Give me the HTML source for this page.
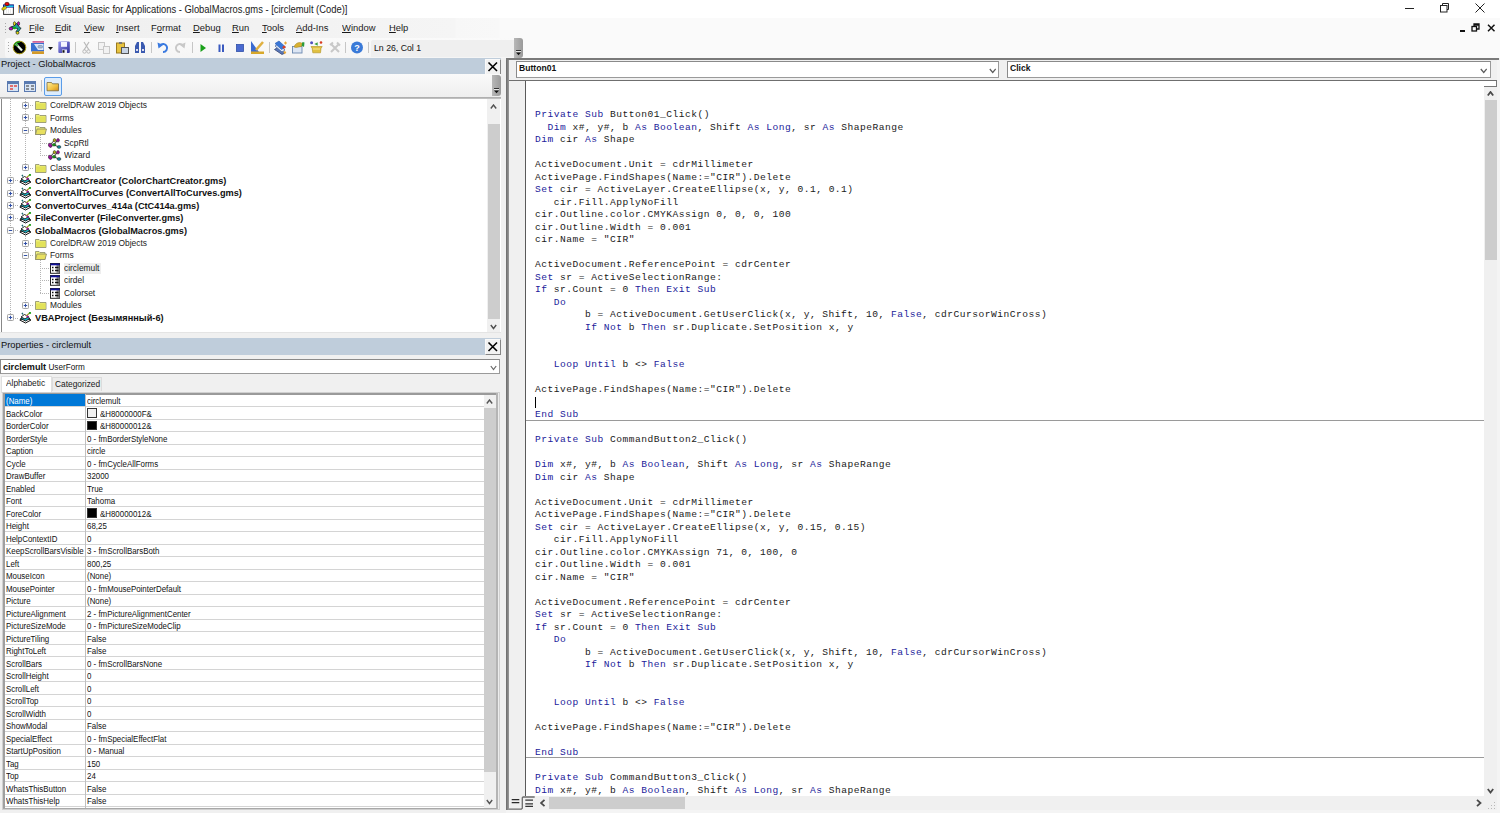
<!DOCTYPE html><html><head><meta charset="utf-8"><style>html,body{margin:0;padding:0;width:1500px;height:813px;overflow:hidden;background:#f0f0f0;position:relative}body>div,body>svg{position:absolute}.t{position:absolute;white-space:pre;line-height:1.2}u{text-decoration:underline;text-underline-offset:1px}.code{position:absolute;white-space:pre;font-family:'Liberation Mono',monospace;font-size:9.6px;letter-spacing:0.49px;line-height:12.5px;color:#1a1a1a}.k{color:#22229a}</style></head><body><div style="left:0px;top:0px;width:1500px;height:18px;background:#fff"></div>
<svg style="position:absolute;left:0;top:0" width="16" height="17" viewBox="0 0 16 17">
<rect x="3.6" y="5.1" width="9.8" height="9.3" fill="#fff" stroke="#333" stroke-width="1"/>
<rect x="3.1" y="4.6" width="10.8" height="3" fill="#1a1aa0"/>
<rect x="4" y="5.5" width="9.5" height="1.4" fill="#18e0f0"/>
<path d="M6 10 h1 M8 10 h1 M10 10 h1 M6 12 h1 M8 12 h1 M10 12 h1" stroke="#ccc" stroke-width="0.8"/>
<ellipse cx="7" cy="4" rx="2.2" ry="1.7" fill="#e80808" stroke="#300" stroke-width="0.6"/>
<ellipse cx="4.2" cy="8.3" rx="2.7" ry="1.5" fill="#e0d000" stroke="#443" stroke-width="0.5" transform="rotate(-30 4.2 8.3)"/>
</svg>
<div class="t" style="left:18px;top:3.94px;font-size:10px;color:#1a1a1a;font-weight:400;font-family:'Liberation Sans', sans-serif;transform:scaleX(0.94);transform-origin:0 0;">Microsoft Visual Basic for Applications - GlobalMacros.gms - [circlemult (Code)]</div>
<div style="left:1405px;top:8px;width:8.5px;height:1px;background:#222"></div>
<svg style="position:absolute;left:1439px;top:3px" width="11" height="10" viewBox="0 0 11 10"><rect x="1.5" y="2.5" width="6.5" height="6.5" fill="none" stroke="#222" stroke-width="1"/><path d="M3.5 2.5 V0.5 H9.5 V6.5 H8" fill="none" stroke="#222" stroke-width="1"/></svg>
<svg style="position:absolute;left:1475px;top:3px" width="11" height="10" viewBox="0 0 11 10"><path d="M0.5 0.5 L9.5 9.5 M9.5 0.5 L0.5 9.5" stroke="#222" stroke-width="1"/></svg>
<div style="left:0px;top:18px;width:1500px;height:20px;background:linear-gradient(to right,#eeeeee 0px,#f5f5f5 455px,#f7f7f7 456px,#f8f8f8 499px,#fafafa 500px,#fafafa 1500px)"></div>
<div style="left:5px;top:22.5px;width:1px;height:1px;background:#a8a8a8"></div>
<div style="left:5px;top:25.5px;width:1px;height:1px;background:#a8a8a8"></div>
<div style="left:5px;top:28.5px;width:1px;height:1px;background:#a8a8a8"></div>
<div style="left:5px;top:31.5px;width:1px;height:1px;background:#a8a8a8"></div>
<svg style="position:absolute;left:8px;top:21px" width="15" height="14" viewBox="0 0 15 14">
<path d="M3 7 L7 5.5 L11.5 7.5 L8.5 11.5 M7 5.5 L8.5 4 L11.5 7.5" stroke="#111" stroke-width="2.6" fill="none"/>
<path d="M3 7 L7 5.5 L11.5 7.5 L8.5 11.5 M7 5.5 L8.5 4 L11.5 7.5" stroke="#1a9a9a" stroke-width="1.6" fill="none"/>
<ellipse cx="3" cy="7.6" rx="1.8" ry="1.5" fill="#c010c0" stroke="#111" stroke-width="0.6"/>
<ellipse cx="6.5" cy="2.6" rx="1.1" ry="1.9" fill="#e8e010" stroke="#111" stroke-width="0.6"/>
<ellipse cx="10.5" cy="2.6" rx="1.1" ry="1.9" fill="#c010c0" stroke="#111" stroke-width="0.6"/>
<ellipse cx="9.5" cy="11.8" rx="1.5" ry="1.4" fill="#e8e010" stroke="#111" stroke-width="0.6"/>
<ellipse cx="6.5" cy="7" rx="1.6" ry="1.2" fill="#10b010"/>
</svg>
<div class="t" style="left:29px;top:22.01px;font-size:9.6px;color:#1a1a1a;font-weight:400;font-family:'Liberation Sans', sans-serif;transform:scaleX(0.98);transform-origin:0 0;"><u>F</u>ile</div>
<div class="t" style="left:55.3px;top:22.01px;font-size:9.6px;color:#1a1a1a;font-weight:400;font-family:'Liberation Sans', sans-serif;transform:scaleX(0.98);transform-origin:0 0;"><u>E</u>dit</div>
<div class="t" style="left:83.6px;top:22.01px;font-size:9.6px;color:#1a1a1a;font-weight:400;font-family:'Liberation Sans', sans-serif;transform:scaleX(0.98);transform-origin:0 0;"><u>V</u>iew</div>
<div class="t" style="left:115.5px;top:22.01px;font-size:9.6px;color:#1a1a1a;font-weight:400;font-family:'Liberation Sans', sans-serif;transform:scaleX(0.98);transform-origin:0 0;"><u>I</u>nsert</div>
<div class="t" style="left:150.8px;top:22.01px;font-size:9.6px;color:#1a1a1a;font-weight:400;font-family:'Liberation Sans', sans-serif;transform:scaleX(0.98);transform-origin:0 0;">F<u>o</u>rmat</div>
<div class="t" style="left:193px;top:22.01px;font-size:9.6px;color:#1a1a1a;font-weight:400;font-family:'Liberation Sans', sans-serif;transform:scaleX(0.98);transform-origin:0 0;"><u>D</u>ebug</div>
<div class="t" style="left:232px;top:22.01px;font-size:9.6px;color:#1a1a1a;font-weight:400;font-family:'Liberation Sans', sans-serif;transform:scaleX(0.98);transform-origin:0 0;"><u>R</u>un</div>
<div class="t" style="left:262px;top:22.01px;font-size:9.6px;color:#1a1a1a;font-weight:400;font-family:'Liberation Sans', sans-serif;transform:scaleX(0.98);transform-origin:0 0;"><u>T</u>ools</div>
<div class="t" style="left:296px;top:22.01px;font-size:9.6px;color:#1a1a1a;font-weight:400;font-family:'Liberation Sans', sans-serif;transform:scaleX(0.98);transform-origin:0 0;"><u>A</u>dd-Ins</div>
<div class="t" style="left:341.5px;top:22.01px;font-size:9.6px;color:#1a1a1a;font-weight:400;font-family:'Liberation Sans', sans-serif;transform:scaleX(0.98);transform-origin:0 0;"><u>W</u>indow</div>
<div class="t" style="left:388.6px;top:22.01px;font-size:9.6px;color:#1a1a1a;font-weight:400;font-family:'Liberation Sans', sans-serif;transform:scaleX(0.98);transform-origin:0 0;"><u>H</u>elp</div>
<div style="left:1460px;top:30px;width:5px;height:2px;background:#111"></div>
<svg style="position:absolute;left:1471px;top:23px" width="9" height="9" viewBox="0 0 9 9"><rect x="1" y="3.5" width="4.5" height="4.5" fill="none" stroke="#111" stroke-width="1.3"/><path d="M3 3.5 V1 H8 V6 H5.5 M3 2 H8" fill="none" stroke="#111" stroke-width="1.3"/></svg>
<svg style="position:absolute;left:1487px;top:24px" width="9" height="8" viewBox="0 0 9 8"><path d="M1 0.8 L7.5 7.2 M7.5 0.8 L1 7.2" stroke="#111" stroke-width="1.5"/></svg>
<div style="left:0px;top:37px;width:1500px;height:21px;background:linear-gradient(to right,#eeeeee 0px,#f5f5f5 455px,#f7f7f7 456px,#f8f8f8 499px,#fafafa 500px,#fafafa 1500px)"></div>
<div style="left:4.6px;top:38px;width:511px;height:19.5px;background:linear-gradient(#fafafa,#f5f5f5);border-radius:3px 0 0 3px"></div>
<div style="left:371px;top:39.8px;width:143px;height:17.4px;background:#efefef;border-radius:2px 0 0 0"></div>
<div style="left:514px;top:38px;width:9px;height:19.5px;background:linear-gradient(to right,#b8b8b8,#9a9a9a);border-radius:0 3px 3px 0"></div>
<svg style="position:absolute;left:515px;top:50px" width="7" height="6" viewBox="0 0 7 6"><path d="M1 0.5 H6" stroke="#333" stroke-width="1"/><path d="M1 1.6 H6" stroke="#fff" stroke-width="0.8"/><path d="M1 2.5 H6 L3.5 5.2 Z" fill="#111"/></svg>
<div style="left:8px;top:42px;width:1px;height:1px;background:#a8a8a8"></div>
<div style="left:8px;top:45px;width:1px;height:1px;background:#a8a8a8"></div>
<div style="left:8px;top:48px;width:1px;height:1px;background:#a8a8a8"></div>
<div style="left:8px;top:51px;width:1px;height:1px;background:#a8a8a8"></div>

<svg style="position:absolute;left:0;top:36px" width="370" height="22" viewBox="0 36 370 22">
<!-- coreldraw -->
<defs><linearGradient id="sv" x1="0" y1="0" x2="1" y2="1"><stop offset="0" stop-color="#9a9af0"/><stop offset="1" stop-color="#2a2a98"/></linearGradient>
<linearGradient id="pk" x1="0" y1="0" x2="0" y2="1"><stop offset="0" stop-color="#c85890"/><stop offset="1" stop-color="#e8a0c0"/></linearGradient></defs>
<circle cx="19.5" cy="47.5" r="6.3" fill="#000" stroke="#a89a10" stroke-width="1"/>
<path d="M14.5 45.5 A5.5 5.5 0 0 1 20 42" fill="none" stroke="#1a9a1a" stroke-width="1.6"/>
<path d="M16 44 L22 50.5" stroke="#e8f4e8" stroke-width="2.2"/><path d="M16 44 L18 46" stroke="#4ab04a" stroke-width="2.2"/>
<!-- userform -->
<rect x="32.5" y="41" width="11.5" height="2.6" fill="url(#pk)"/>
<rect x="31" y="43" width="13" height="8.5" fill="#3a70d0"/>
<path d="M34 44 H43.5 V50 H38 Z" fill="#dce8f8"/>
<rect x="38" y="45.5" width="4.5" height="2.5" rx="1" fill="#a8b8d0" stroke="#7088a8" stroke-width="0.6"/>
<rect x="32" y="51.3" width="12" height="2.7" fill="#d49a28"/>
<path d="M48 47 H53 L50.5 50 Z" fill="#111"/>
<!-- save -->
<rect x="58.3" y="41.5" width="11.5" height="11.5" rx="1" fill="url(#sv)"/>
<rect x="61" y="42" width="6" height="4.8" fill="#f4f4ff"/>
<rect x="62" y="49.5" width="5" height="3.5" fill="#e8e8f8"/><rect x="62.5" y="50.2" width="2" height="2.5" fill="#111"/>
<!-- separators -->
<rect x="75" y="42" width="1" height="11" fill="#c6c6c6"/>
<rect x="151" y="42" width="1" height="11" fill="#c6c6c6"/>
<rect x="192" y="42" width="1" height="11" fill="#c6c6c6"/>
<rect x="269" y="42" width="1" height="11" fill="#c6c6c6"/>
<rect x="345" y="42" width="1" height="11" fill="#c6c6c6"/>
<rect x="368" y="42" width="1" height="11" fill="#c6c6c6"/>
<!-- cut -->
<path d="M84 42 L89 50 M89 42 L84 50" stroke="#b8b8b8" stroke-width="1.2"/>
<circle cx="84.5" cy="51.5" r="1.7" fill="none" stroke="#b8b8b8" stroke-width="1"/><circle cx="88.5" cy="51.5" r="1.7" fill="none" stroke="#b8b8b8" stroke-width="1"/>
<!-- copy -->
<rect x="98.5" y="42.5" width="6" height="7" fill="#f2f2f2" stroke="#c8c8c8"/>
<rect x="103.5" y="46.5" width="6" height="7" fill="#f2f2f2" stroke="#c8c8c8"/>
<!-- paste -->
<rect x="116.5" y="43" width="8" height="10" fill="#e8c440" stroke="#9a7a20"/>
<rect x="119" y="42" width="3" height="2" fill="#777"/>
<rect x="121.5" y="47.5" width="7" height="6" fill="#c8d4e4" stroke="#555"/>
<!-- find -->
<path d="M135 53 V46 L137 42 H139 V53 Z M141 53 V42 H143 L145 46 V53 Z" fill="#3a5ab0"/>
<rect x="136" y="49" width="2" height="2" fill="#dde"/><rect x="142" y="49" width="2" height="2" fill="#dde"/>
<!-- undo -->
<path d="M160 45.5 A4 4 0 1 1 163 52" fill="none" stroke="#3a7ae0" stroke-width="2"/><path d="M157.5 42.5 L158.5 48.5 L163 45 Z" fill="#3a7ae0"/>
<!-- redo -->
<path d="M183 45.5 A4 4 0 1 0 180 52" fill="none" stroke="#c8c8c8" stroke-width="2"/><path d="M185.5 42.5 L184.5 48.5 L180 45 Z" fill="#c8c8c8"/>
<!-- run -->
<path d="M200.5 44 L206 48 L200.5 52 Z" fill="#1aa01a"/>
<!-- pause -->
<rect x="218.5" y="44.5" width="2" height="7.5" fill="#3a5ac0"/><rect x="222" y="44.5" width="2" height="7.5" fill="#3a5ac0"/>
<!-- stop -->
<rect x="236.5" y="44.5" width="7" height="7" fill="#4a6ad0" stroke="#3050a8" stroke-width="0.8"/>
<!-- design -->
<path d="M251 41 L251 52 L259 52 Z" fill="#3a6ad0"/><path d="M256 50 L263 42" stroke="#e0b040" stroke-width="2.5"/><rect x="251" y="51.5" width="13" height="2.5" fill="#d8a82a"/>
<!-- project explorer -->
<path d="M274.5 49.5 L277.5 47.5 L285 53 L282 54.5 Z" fill="#5a78b8" stroke="#2a3a6a" stroke-width="0.7"/>
<path d="M275 46 L278 44 L285 50 L282 52 Z" fill="#e8f0fb" stroke="#3a5a9a" stroke-width="0.7"/>
<path d="M275 43.5 L279 41 L285.5 47 L281.5 49.5 Z" fill="#3a78d8" stroke="#2a5ab0" stroke-width="0.6"/>
<path d="M285.5 41.3 L287 43 L285.5 44.7 L284 43 Z" fill="#e8a838"/>
<circle cx="284" cy="47.2" r="1.4" fill="#e04020"/>
<path d="M284.8 50.8 L286.3 52.5 L284.8 54.2 L283.3 52.5 Z" fill="#e8a838"/>
<!-- properties -->
<rect x="292.5" y="46.5" width="9.5" height="6.5" fill="#dce6f4" stroke="#6a88b0" stroke-width="0.9"/>
<path d="M294 47 C295 44 297 42.5 300 42.5 L303 43.5 L301.5 46.5 L296 47.5 Z" fill="#d8b030" stroke="#a08020" stroke-width="0.5"/>
<path d="M302.5 42 L304.5 42.5 L304 47 L301.5 45.5 Z" fill="#2a9a3a"/>
<!-- object browser -->
<circle cx="311.6" cy="42.8" r="1.5" fill="#5050c0"/>
<circle cx="321" cy="42.5" r="1.3" fill="#d83a20"/>
<path d="M314.3 44 L317.7 42.2 L317.7 45.8 Z" fill="#3aa040"/>
<path d="M311 46.5 H322.2 L321 48.5 L320.5 52.8 H312.8 L312.2 48.5 Z" fill="#e0c040" stroke="#b09020" stroke-width="0.6"/>
<path d="M313 49 H320" stroke="#f4e08a" stroke-width="1.2"/>
<!-- toolbox gray -->
<path d="M331.5 44.5 L339 52 M338.5 44.5 L331 52" stroke="#c8c8c8" stroke-width="2"/>
<path d="M330 45 L333 42.5 M337 42.5 L340 45.5" stroke="#c8c8c8" stroke-width="2"/>
<!-- help -->
<circle cx="357" cy="47.5" r="6" fill="#3a7ad8"/>
<text x="357" y="51.2" font-family="Liberation Sans" font-size="9" font-weight="700" fill="#fff" text-anchor="middle">?</text>
</svg>
<div class="t" style="left:374px;top:42.41px;font-size:9.6px;color:#111;font-weight:400;font-family:'Liberation Sans', sans-serif;transform:scaleX(0.91);transform-origin:0 0;">Ln 26, Col 1</div>
<div style="left:0px;top:58px;width:501px;height:16.6px;background:#bfcddb"></div>
<div class="t" style="left:1px;top:58.31px;font-size:9.6px;color:#111;font-weight:400;font-family:'Liberation Sans', sans-serif;transform:scaleX(0.97);transform-origin:0 0;">Project - GlobalMacros</div>
<div style="left:484.8px;top:59px;width:16px;height:15.7px;background:#f2f2f2;border-style:solid;border-width:1px 1.5px 1.5px 1px;border-color:#fafafa #858585 #858585 #fafafa;box-sizing:border-box"></div>
<svg style="position:absolute;left:484.8px;top:59px" width="16" height="16" viewBox="0 0 16 16"><path d="M3.5 3.5 L12 12 M12 3.5 L3.5 12" stroke="#000" stroke-width="1.6"/></svg>
<div style="left:0px;top:74px;width:501px;height:23px;background:linear-gradient(#fafafa,#eeeeee)"></div>
<div style="left:492px;top:75px;width:9px;height:21px;background:linear-gradient(to right,#b8b8b8,#9a9a9a);border-radius:0 3px 3px 0"></div>
<svg style="position:absolute;left:493px;top:88px" width="7" height="6" viewBox="0 0 7 6"><path d="M1 0.5 H6" stroke="#333" stroke-width="1"/><path d="M1 1.6 H6" stroke="#fff" stroke-width="0.8"/><path d="M1 2.5 H6 L3.5 5.2 Z" fill="#111"/></svg>
<svg style="position:absolute;left:0;top:74px" width="70" height="24" viewBox="0 74 70 24">
<rect x="7.5" y="81.5" width="11" height="10" fill="#d8e4f4" stroke="#5a7ab0"/><rect x="8" y="82" width="10" height="2" fill="#5a7ab0"/>
<rect x="10" y="85" width="3" height="2" fill="#e07070"/><rect x="14" y="85" width="3" height="2" fill="#e07070"/><rect x="10" y="88" width="3" height="2" fill="#e07070"/>
<rect x="24.5" y="81.5" width="11" height="10" fill="#d8e4f4" stroke="#5a7ab0"/><rect x="25" y="82" width="10" height="2" fill="#5a7ab0"/>
<path d="M26 86 H29 M26 89 H29 M31 86 H34 M31 89 H34" stroke="#333" stroke-width="1"/>
<rect x="41" y="80" width="1" height="11.5" fill="#c6c6c6"/>
<rect x="44.5" y="77.5" width="17" height="18" rx="1.5" fill="#dcecfc" stroke="#5a9ce8"/>
<defs><linearGradient id="fg" x1="0" y1="0" x2="1" y2="1"><stop offset="0" stop-color="#fff0a0"/><stop offset="0.6" stop-color="#f0c040"/><stop offset="1" stop-color="#d08a20"/></linearGradient></defs><path d="M47 82.5 H51.5 L52.5 83.8 H58.5 V90.8 H47 Z" fill="url(#fg)" stroke="#6a5a30" stroke-width="0.7"/>
</svg>
<div style="left:0px;top:97px;width:501px;height:2px;background:linear-gradient(#a8a8a8,#c8c8c8)"></div>
<div style="left:0px;top:99px;width:501px;height:234px;background:#fff"></div>
<div style="left:1px;top:99px;width:1.2px;height:234px;background:#888"></div>
<div style="left:487px;top:99px;width:13px;height:233px;background:#f0f0f0"></div>
<div style="left:487.5px;top:123.5px;width:12px;height:195.5px;background:#cdcdcd"></div>
<svg style="position:absolute;left:490px;top:103.5px" width="7" height="8" viewBox="0 0 7 8"><path d="M0.8 4.5 L3.5 1 L6.2 4.5" fill="none" stroke="#505050" stroke-width="1.4"/></svg>
<svg style="position:absolute;left:490px;top:323.5px" width="7" height="8" viewBox="0 0 7 8"><path d="M0.8 1 L3.5 4.5 L6.2 1" fill="none" stroke="#505050" stroke-width="1.4"/></svg>
<div style="left:0px;top:332px;width:501px;height:1.2px;background:#e4e4e4"></div>
<div style="left:10px;top:99px;width:1px;height:219px;background:repeating-linear-gradient(#b4b4b4 0 1px,transparent 1px 2px)"></div>
<div style="left:25px;top:99px;width:1px;height:69px;background:repeating-linear-gradient(#b4b4b4 0 1px,transparent 1px 2px)"></div>
<div style="left:25px;top:236px;width:1px;height:70px;background:repeating-linear-gradient(#b4b4b4 0 1px,transparent 1px 2px)"></div>
<div style="left:39.5px;top:135px;width:1px;height:21px;background:repeating-linear-gradient(#b4b4b4 0 1px,transparent 1px 2px)"></div>
<div style="left:39.5px;top:260px;width:1px;height:34px;background:repeating-linear-gradient(#b4b4b4 0 1px,transparent 1px 2px)"></div>
<div style="left:26px;top:105px;width:8px;height:1px;background:repeating-linear-gradient(to right,#b4b4b4 0 1px,transparent 1px 2px)"></div>
<svg style="position:absolute;left:22px;top:102px" width="7" height="7" viewBox="0 0 7 7"><rect x="0.5" y="0.5" width="6" height="6" rx="0.8" fill="#fbfbfb" stroke="#a4a4a4" stroke-width="1"/><path d="M1.8 3.5 H5.2 M3.5 1.8 V5.2" stroke="#3050a8" stroke-width="1"/></svg>
<svg style="position:absolute;left:35px;top:100.0px" width="12" height="10" viewBox="0 0 12 10"><path d="M0.5 1.5 H4 L5 2.5 H11 V9.5 H0.5 Z" fill="#eef07a" stroke="#8a8a6a" stroke-width="0.8"/><rect x="1.2" y="3.5" width="9.2" height="5.5" fill="#e2e25a"/></svg>
<div class="t" style="left:49.5px;top:100.48px;font-size:9px;color:#1a1a1a;font-weight:400;font-family:'Liberation Sans', sans-serif;transform:scaleX(0.93);transform-origin:0 0;">CorelDRAW 2019 Objects</div>
<div style="left:26px;top:118px;width:8px;height:1px;background:repeating-linear-gradient(to right,#b4b4b4 0 1px,transparent 1px 2px)"></div>
<svg style="position:absolute;left:22px;top:114px" width="7" height="7" viewBox="0 0 7 7"><rect x="0.5" y="0.5" width="6" height="6" rx="0.8" fill="#fbfbfb" stroke="#a4a4a4" stroke-width="1"/><path d="M1.8 3.5 H5.2 M3.5 1.8 V5.2" stroke="#3050a8" stroke-width="1"/></svg>
<svg style="position:absolute;left:35px;top:112.5px" width="12" height="10" viewBox="0 0 12 10"><path d="M0.5 1.5 H4 L5 2.5 H11 V9.5 H0.5 Z" fill="#eef07a" stroke="#8a8a6a" stroke-width="0.8"/><rect x="1.2" y="3.5" width="9.2" height="5.5" fill="#e2e25a"/></svg>
<div class="t" style="left:49.5px;top:112.98px;font-size:9px;color:#1a1a1a;font-weight:400;font-family:'Liberation Sans', sans-serif;transform:scaleX(0.93);transform-origin:0 0;">Forms</div>
<div style="left:26px;top:130px;width:8px;height:1px;background:repeating-linear-gradient(to right,#b4b4b4 0 1px,transparent 1px 2px)"></div>
<svg style="position:absolute;left:22px;top:127px" width="7" height="7" viewBox="0 0 7 7"><rect x="0.5" y="0.5" width="6" height="6" rx="0.8" fill="#fbfbfb" stroke="#a4a4a4" stroke-width="1"/><path d="M1.8 3.5 H5.2" stroke="#3050a8" stroke-width="1"/></svg>
<svg style="position:absolute;left:35px;top:125.0px" width="12" height="10" viewBox="0 0 12 10"><path d="M0.5 1.5 H4 L5 2.5 H10 V9.5 H0.5 Z" fill="#eef07a" stroke="#8a8a6a" stroke-width="0.8"/><path d="M2 4 H11.5 L10 9.5 H0.5 Z" fill="#e8e060" stroke="#8a8a6a" stroke-width="0.8"/></svg>
<div class="t" style="left:49.5px;top:125.48px;font-size:9px;color:#1a1a1a;font-weight:400;font-family:'Liberation Sans', sans-serif;transform:scaleX(0.93);transform-origin:0 0;">Modules</div>
<div style="left:40px;top:143px;width:9px;height:1px;background:repeating-linear-gradient(to right,#b4b4b4 0 1px,transparent 1px 2px)"></div>
<svg style="position:absolute;left:48px;top:137.5px" width="14" height="11" viewBox="0 0 14 11"><path d="M2 7 L6.5 2 M6 7 L9.5 2 M6 7 L11 9" stroke="#222" stroke-width="0.9"/><ellipse cx="2.2" cy="7.3" rx="1.7" ry="2.2" fill="#9a109a" stroke="#222" stroke-width="0.5" transform="rotate(-30 2.2 7.3)"/><ellipse cx="6" cy="6.8" rx="1.8" ry="1.3" fill="#10a010" stroke="#222" stroke-width="0.5"/><ellipse cx="11" cy="9" rx="1.9" ry="1.4" fill="#108a9a" stroke="#222" stroke-width="0.5"/><ellipse cx="6.5" cy="2.2" rx="1.3" ry="1.7" fill="#b0a810" stroke="#222" stroke-width="0.5"/><ellipse cx="10" cy="2.3" rx="1.4" ry="1.8" fill="#9a109a" stroke="#222" stroke-width="0.5"/></svg>
<div class="t" style="left:64.3px;top:137.88px;font-size:9px;color:#1a1a1a;font-weight:400;font-family:'Liberation Sans', sans-serif;transform:scaleX(0.93);transform-origin:0 0;">ScpRtl</div>
<div style="left:40px;top:155px;width:9px;height:1px;background:repeating-linear-gradient(to right,#b4b4b4 0 1px,transparent 1px 2px)"></div>
<svg style="position:absolute;left:48px;top:150.0px" width="14" height="11" viewBox="0 0 14 11"><path d="M2 7 L6.5 2 M6 7 L9.5 2 M6 7 L11 9" stroke="#222" stroke-width="0.9"/><ellipse cx="2.2" cy="7.3" rx="1.7" ry="2.2" fill="#9a109a" stroke="#222" stroke-width="0.5" transform="rotate(-30 2.2 7.3)"/><ellipse cx="6" cy="6.8" rx="1.8" ry="1.3" fill="#10a010" stroke="#222" stroke-width="0.5"/><ellipse cx="11" cy="9" rx="1.9" ry="1.4" fill="#108a9a" stroke="#222" stroke-width="0.5"/><ellipse cx="6.5" cy="2.2" rx="1.3" ry="1.7" fill="#b0a810" stroke="#222" stroke-width="0.5"/><ellipse cx="10" cy="2.3" rx="1.4" ry="1.8" fill="#9a109a" stroke="#222" stroke-width="0.5"/></svg>
<div class="t" style="left:64.3px;top:150.38px;font-size:9px;color:#1a1a1a;font-weight:400;font-family:'Liberation Sans', sans-serif;transform:scaleX(0.93);transform-origin:0 0;">Wizard</div>
<div style="left:26px;top:168px;width:8px;height:1px;background:repeating-linear-gradient(to right,#b4b4b4 0 1px,transparent 1px 2px)"></div>
<svg style="position:absolute;left:22px;top:164px" width="7" height="7" viewBox="0 0 7 7"><rect x="0.5" y="0.5" width="6" height="6" rx="0.8" fill="#fbfbfb" stroke="#a4a4a4" stroke-width="1"/><path d="M1.8 3.5 H5.2 M3.5 1.8 V5.2" stroke="#3050a8" stroke-width="1"/></svg>
<svg style="position:absolute;left:35px;top:162.5px" width="12" height="10" viewBox="0 0 12 10"><path d="M0.5 1.5 H4 L5 2.5 H11 V9.5 H0.5 Z" fill="#eef07a" stroke="#8a8a6a" stroke-width="0.8"/><rect x="1.2" y="3.5" width="9.2" height="5.5" fill="#e2e25a"/></svg>
<div class="t" style="left:49.5px;top:162.98px;font-size:9px;color:#1a1a1a;font-weight:400;font-family:'Liberation Sans', sans-serif;transform:scaleX(0.93);transform-origin:0 0;">Class Modules</div>
<div style="left:11px;top:180px;width:7px;height:1px;background:repeating-linear-gradient(to right,#b4b4b4 0 1px,transparent 1px 2px)"></div>
<svg style="position:absolute;left:7px;top:177px" width="7" height="7" viewBox="0 0 7 7"><rect x="0.5" y="0.5" width="6" height="6" rx="0.8" fill="#fbfbfb" stroke="#a4a4a4" stroke-width="1"/><path d="M1.8 3.5 H5.2 M3.5 1.8 V5.2" stroke="#3050a8" stroke-width="1"/></svg>
<svg style="position:absolute;left:19px;top:174.0px" width="13" height="12" viewBox="0 0 13 12"><path d="M0.8 8 L6 5.5 L12 8 L6.5 11 Z" fill="#fff" stroke="#111" stroke-width="1"/><path d="M1.5 6.5 L6 4 L11 6.5 L6.5 9 Z" fill="#1ab8c8" stroke="#111" stroke-width="0.9"/><path d="M2 5 L5.5 2.5 L9.5 4.5 L6 7 Z" fill="#fff" stroke="#111" stroke-width="0.9"/><path d="M4 2.5 L3 0.8" stroke="#1a6a6a" stroke-width="1.4"/><path d="M7 4 L11 0.8" stroke="#a0a020" stroke-width="1.2"/><circle cx="11" cy="1" r="1.1" fill="#20a020"/><circle cx="8.5" cy="4.5" r="1" fill="#b010b0"/></svg>
<div class="t" style="left:35px;top:174.81px;font-size:9.6px;color:#111;font-weight:700;font-family:'Liberation Sans', sans-serif;transform:scaleX(0.96);transform-origin:0 0;">ColorChartCreator (ColorChartCreator.gms)</div>
<div style="left:11px;top:193px;width:7px;height:1px;background:repeating-linear-gradient(to right,#b4b4b4 0 1px,transparent 1px 2px)"></div>
<svg style="position:absolute;left:7px;top:190px" width="7" height="7" viewBox="0 0 7 7"><rect x="0.5" y="0.5" width="6" height="6" rx="0.8" fill="#fbfbfb" stroke="#a4a4a4" stroke-width="1"/><path d="M1.8 3.5 H5.2 M3.5 1.8 V5.2" stroke="#3050a8" stroke-width="1"/></svg>
<svg style="position:absolute;left:19px;top:186.5px" width="13" height="12" viewBox="0 0 13 12"><path d="M0.8 8 L6 5.5 L12 8 L6.5 11 Z" fill="#fff" stroke="#111" stroke-width="1"/><path d="M1.5 6.5 L6 4 L11 6.5 L6.5 9 Z" fill="#1ab8c8" stroke="#111" stroke-width="0.9"/><path d="M2 5 L5.5 2.5 L9.5 4.5 L6 7 Z" fill="#fff" stroke="#111" stroke-width="0.9"/><path d="M4 2.5 L3 0.8" stroke="#1a6a6a" stroke-width="1.4"/><path d="M7 4 L11 0.8" stroke="#a0a020" stroke-width="1.2"/><circle cx="11" cy="1" r="1.1" fill="#20a020"/><circle cx="8.5" cy="4.5" r="1" fill="#b010b0"/></svg>
<div class="t" style="left:35px;top:187.31px;font-size:9.6px;color:#111;font-weight:700;font-family:'Liberation Sans', sans-serif;transform:scaleX(0.96);transform-origin:0 0;">ConvertAllToCurves (ConvertAllToCurves.gms)</div>
<div style="left:11px;top:205px;width:7px;height:1px;background:repeating-linear-gradient(to right,#b4b4b4 0 1px,transparent 1px 2px)"></div>
<svg style="position:absolute;left:7px;top:202px" width="7" height="7" viewBox="0 0 7 7"><rect x="0.5" y="0.5" width="6" height="6" rx="0.8" fill="#fbfbfb" stroke="#a4a4a4" stroke-width="1"/><path d="M1.8 3.5 H5.2 M3.5 1.8 V5.2" stroke="#3050a8" stroke-width="1"/></svg>
<svg style="position:absolute;left:19px;top:199.0px" width="13" height="12" viewBox="0 0 13 12"><path d="M0.8 8 L6 5.5 L12 8 L6.5 11 Z" fill="#fff" stroke="#111" stroke-width="1"/><path d="M1.5 6.5 L6 4 L11 6.5 L6.5 9 Z" fill="#1ab8c8" stroke="#111" stroke-width="0.9"/><path d="M2 5 L5.5 2.5 L9.5 4.5 L6 7 Z" fill="#fff" stroke="#111" stroke-width="0.9"/><path d="M4 2.5 L3 0.8" stroke="#1a6a6a" stroke-width="1.4"/><path d="M7 4 L11 0.8" stroke="#a0a020" stroke-width="1.2"/><circle cx="11" cy="1" r="1.1" fill="#20a020"/><circle cx="8.5" cy="4.5" r="1" fill="#b010b0"/></svg>
<div class="t" style="left:35px;top:199.81px;font-size:9.6px;color:#111;font-weight:700;font-family:'Liberation Sans', sans-serif;transform:scaleX(0.96);transform-origin:0 0;">ConvertoCurves_414a (CtC414a.gms)</div>
<div style="left:11px;top:218px;width:7px;height:1px;background:repeating-linear-gradient(to right,#b4b4b4 0 1px,transparent 1px 2px)"></div>
<svg style="position:absolute;left:7px;top:214px" width="7" height="7" viewBox="0 0 7 7"><rect x="0.5" y="0.5" width="6" height="6" rx="0.8" fill="#fbfbfb" stroke="#a4a4a4" stroke-width="1"/><path d="M1.8 3.5 H5.2 M3.5 1.8 V5.2" stroke="#3050a8" stroke-width="1"/></svg>
<svg style="position:absolute;left:19px;top:211.5px" width="13" height="12" viewBox="0 0 13 12"><path d="M0.8 8 L6 5.5 L12 8 L6.5 11 Z" fill="#fff" stroke="#111" stroke-width="1"/><path d="M1.5 6.5 L6 4 L11 6.5 L6.5 9 Z" fill="#1ab8c8" stroke="#111" stroke-width="0.9"/><path d="M2 5 L5.5 2.5 L9.5 4.5 L6 7 Z" fill="#fff" stroke="#111" stroke-width="0.9"/><path d="M4 2.5 L3 0.8" stroke="#1a6a6a" stroke-width="1.4"/><path d="M7 4 L11 0.8" stroke="#a0a020" stroke-width="1.2"/><circle cx="11" cy="1" r="1.1" fill="#20a020"/><circle cx="8.5" cy="4.5" r="1" fill="#b010b0"/></svg>
<div class="t" style="left:35px;top:212.31px;font-size:9.6px;color:#111;font-weight:700;font-family:'Liberation Sans', sans-serif;transform:scaleX(0.96);transform-origin:0 0;">FileConverter (FileConverter.gms)</div>
<div style="left:11px;top:230px;width:7px;height:1px;background:repeating-linear-gradient(to right,#b4b4b4 0 1px,transparent 1px 2px)"></div>
<svg style="position:absolute;left:7px;top:227px" width="7" height="7" viewBox="0 0 7 7"><rect x="0.5" y="0.5" width="6" height="6" rx="0.8" fill="#fbfbfb" stroke="#a4a4a4" stroke-width="1"/><path d="M1.8 3.5 H5.2" stroke="#3050a8" stroke-width="1"/></svg>
<svg style="position:absolute;left:19px;top:224.0px" width="13" height="12" viewBox="0 0 13 12"><path d="M0.8 8 L6 5.5 L12 8 L6.5 11 Z" fill="#fff" stroke="#111" stroke-width="1"/><path d="M1.5 6.5 L6 4 L11 6.5 L6.5 9 Z" fill="#1ab8c8" stroke="#111" stroke-width="0.9"/><path d="M2 5 L5.5 2.5 L9.5 4.5 L6 7 Z" fill="#fff" stroke="#111" stroke-width="0.9"/><path d="M4 2.5 L3 0.8" stroke="#1a6a6a" stroke-width="1.4"/><path d="M7 4 L11 0.8" stroke="#a0a020" stroke-width="1.2"/><circle cx="11" cy="1" r="1.1" fill="#20a020"/><circle cx="8.5" cy="4.5" r="1" fill="#b010b0"/></svg>
<div class="t" style="left:35px;top:224.81px;font-size:9.6px;color:#111;font-weight:700;font-family:'Liberation Sans', sans-serif;transform:scaleX(0.96);transform-origin:0 0;">GlobalMacros (GlobalMacros.gms)</div>
<div style="left:26px;top:243px;width:8px;height:1px;background:repeating-linear-gradient(to right,#b4b4b4 0 1px,transparent 1px 2px)"></div>
<svg style="position:absolute;left:22px;top:240px" width="7" height="7" viewBox="0 0 7 7"><rect x="0.5" y="0.5" width="6" height="6" rx="0.8" fill="#fbfbfb" stroke="#a4a4a4" stroke-width="1"/><path d="M1.8 3.5 H5.2 M3.5 1.8 V5.2" stroke="#3050a8" stroke-width="1"/></svg>
<svg style="position:absolute;left:35px;top:237.5px" width="12" height="10" viewBox="0 0 12 10"><path d="M0.5 1.5 H4 L5 2.5 H11 V9.5 H0.5 Z" fill="#eef07a" stroke="#8a8a6a" stroke-width="0.8"/><rect x="1.2" y="3.5" width="9.2" height="5.5" fill="#e2e25a"/></svg>
<div class="t" style="left:49.5px;top:237.98px;font-size:9px;color:#1a1a1a;font-weight:400;font-family:'Liberation Sans', sans-serif;transform:scaleX(0.93);transform-origin:0 0;">CorelDRAW 2019 Objects</div>
<div style="left:26px;top:255px;width:8px;height:1px;background:repeating-linear-gradient(to right,#b4b4b4 0 1px,transparent 1px 2px)"></div>
<svg style="position:absolute;left:22px;top:252px" width="7" height="7" viewBox="0 0 7 7"><rect x="0.5" y="0.5" width="6" height="6" rx="0.8" fill="#fbfbfb" stroke="#a4a4a4" stroke-width="1"/><path d="M1.8 3.5 H5.2" stroke="#3050a8" stroke-width="1"/></svg>
<svg style="position:absolute;left:35px;top:250.0px" width="12" height="10" viewBox="0 0 12 10"><path d="M0.5 1.5 H4 L5 2.5 H10 V9.5 H0.5 Z" fill="#eef07a" stroke="#8a8a6a" stroke-width="0.8"/><path d="M2 4 H11.5 L10 9.5 H0.5 Z" fill="#e8e060" stroke="#8a8a6a" stroke-width="0.8"/></svg>
<div class="t" style="left:49.5px;top:250.48px;font-size:9px;color:#1a1a1a;font-weight:400;font-family:'Liberation Sans', sans-serif;transform:scaleX(0.93);transform-origin:0 0;">Forms</div>
<div style="left:40px;top:268px;width:9px;height:1px;background:repeating-linear-gradient(to right,#b4b4b4 0 1px,transparent 1px 2px)"></div>
<div style="left:63.5px;top:262.5px;width:37.5px;height:11px;background:#eeeeee"></div>
<svg style="position:absolute;left:50px;top:262.5px" width="11" height="11" viewBox="0 0 11 11"><rect x="0.5" y="0.5" width="9" height="9.8" fill="#fff" stroke="#222" stroke-width="1"/><rect x="6.5" y="2" width="3" height="8" fill="#8a8a8a"/><rect x="0.5" y="0.5" width="9" height="1.8" fill="#10109a"/><path d="M2 4.5 H3.5 M2 7.5 H3.5 M5 4.5 H8.5 M5 7.5 H8.5" stroke="#111" stroke-width="1.3"/></svg>
<div class="t" style="left:64.3px;top:262.88px;font-size:9px;color:#1a1a1a;font-weight:400;font-family:'Liberation Sans', sans-serif;transform:scaleX(0.93);transform-origin:0 0;">circlemult</div>
<div style="left:40px;top:280px;width:9px;height:1px;background:repeating-linear-gradient(to right,#b4b4b4 0 1px,transparent 1px 2px)"></div>
<svg style="position:absolute;left:50px;top:275.0px" width="11" height="11" viewBox="0 0 11 11"><rect x="0.5" y="0.5" width="9" height="9.8" fill="#fff" stroke="#222" stroke-width="1"/><rect x="6.5" y="2" width="3" height="8" fill="#8a8a8a"/><rect x="0.5" y="0.5" width="9" height="1.8" fill="#10109a"/><path d="M2 4.5 H3.5 M2 7.5 H3.5 M5 4.5 H8.5 M5 7.5 H8.5" stroke="#111" stroke-width="1.3"/></svg>
<div class="t" style="left:64.3px;top:275.38px;font-size:9px;color:#1a1a1a;font-weight:400;font-family:'Liberation Sans', sans-serif;transform:scaleX(0.93);transform-origin:0 0;">cirdel</div>
<div style="left:40px;top:293px;width:9px;height:1px;background:repeating-linear-gradient(to right,#b4b4b4 0 1px,transparent 1px 2px)"></div>
<svg style="position:absolute;left:50px;top:287.5px" width="11" height="11" viewBox="0 0 11 11"><rect x="0.5" y="0.5" width="9" height="9.8" fill="#fff" stroke="#222" stroke-width="1"/><rect x="6.5" y="2" width="3" height="8" fill="#8a8a8a"/><rect x="0.5" y="0.5" width="9" height="1.8" fill="#10109a"/><path d="M2 4.5 H3.5 M2 7.5 H3.5 M5 4.5 H8.5 M5 7.5 H8.5" stroke="#111" stroke-width="1.3"/></svg>
<div class="t" style="left:64.3px;top:287.88px;font-size:9px;color:#1a1a1a;font-weight:400;font-family:'Liberation Sans', sans-serif;transform:scaleX(0.93);transform-origin:0 0;">Colorset</div>
<div style="left:26px;top:305px;width:8px;height:1px;background:repeating-linear-gradient(to right,#b4b4b4 0 1px,transparent 1px 2px)"></div>
<svg style="position:absolute;left:22px;top:302px" width="7" height="7" viewBox="0 0 7 7"><rect x="0.5" y="0.5" width="6" height="6" rx="0.8" fill="#fbfbfb" stroke="#a4a4a4" stroke-width="1"/><path d="M1.8 3.5 H5.2 M3.5 1.8 V5.2" stroke="#3050a8" stroke-width="1"/></svg>
<svg style="position:absolute;left:35px;top:300.0px" width="12" height="10" viewBox="0 0 12 10"><path d="M0.5 1.5 H4 L5 2.5 H11 V9.5 H0.5 Z" fill="#eef07a" stroke="#8a8a6a" stroke-width="0.8"/><rect x="1.2" y="3.5" width="9.2" height="5.5" fill="#e2e25a"/></svg>
<div class="t" style="left:49.5px;top:300.48px;font-size:9px;color:#1a1a1a;font-weight:400;font-family:'Liberation Sans', sans-serif;transform:scaleX(0.93);transform-origin:0 0;">Modules</div>
<div style="left:11px;top:318px;width:7px;height:1px;background:repeating-linear-gradient(to right,#b4b4b4 0 1px,transparent 1px 2px)"></div>
<svg style="position:absolute;left:7px;top:314px" width="7" height="7" viewBox="0 0 7 7"><rect x="0.5" y="0.5" width="6" height="6" rx="0.8" fill="#fbfbfb" stroke="#a4a4a4" stroke-width="1"/><path d="M1.8 3.5 H5.2 M3.5 1.8 V5.2" stroke="#3050a8" stroke-width="1"/></svg>
<svg style="position:absolute;left:19px;top:311.5px" width="13" height="12" viewBox="0 0 13 12"><path d="M0.8 8 L6 5.5 L12 8 L6.5 11 Z" fill="#fff" stroke="#111" stroke-width="1"/><path d="M1.5 6.5 L6 4 L11 6.5 L6.5 9 Z" fill="#1ab8c8" stroke="#111" stroke-width="0.9"/><path d="M2 5 L5.5 2.5 L9.5 4.5 L6 7 Z" fill="#fff" stroke="#111" stroke-width="0.9"/><path d="M4 2.5 L3 0.8" stroke="#1a6a6a" stroke-width="1.4"/><path d="M7 4 L11 0.8" stroke="#a0a020" stroke-width="1.2"/><circle cx="11" cy="1" r="1.1" fill="#20a020"/><circle cx="8.5" cy="4.5" r="1" fill="#b010b0"/></svg>
<div class="t" style="left:35px;top:312.31px;font-size:9.6px;color:#111;font-weight:700;font-family:'Liberation Sans', sans-serif;transform:scaleX(0.96);transform-origin:0 0;">VBAProject (Безымянный-6)</div>
<div style="left:0px;top:333px;width:501px;height:5.5px;background:#f0f0f0"></div>
<div style="left:0px;top:338.2px;width:501px;height:17px;background:#bfcddb"></div>
<div class="t" style="left:1px;top:339.11px;font-size:9.6px;color:#111;font-weight:400;font-family:'Liberation Sans', sans-serif;transform:scaleX(0.97);transform-origin:0 0;">Properties - circlemult</div>
<div style="left:484.8px;top:339px;width:16px;height:15.7px;background:#f2f2f2;border-style:solid;border-width:1px 1.5px 1.5px 1px;border-color:#fafafa #858585 #858585 #fafafa;box-sizing:border-box"></div>
<svg style="position:absolute;left:484.8px;top:339px" width="16" height="16" viewBox="0 0 16 16"><path d="M3.5 3.5 L12 12 M12 3.5 L3.5 12" stroke="#000" stroke-width="1.6"/></svg>
<div style="left:0px;top:355px;width:501px;height:21px;background:#f0f0f0"></div>
<div style="left:0px;top:359px;width:500px;height:15px;background:#fff;border:1px solid #8a8a8a;border-color:#8a8a8a #9a9a9a #9a9a9a #8a8a8a;box-sizing:border-box"></div>
<div class="t" style="left:3px;top:360.98px;font-size:9px;color:#111;font-weight:400;font-family:'Liberation Sans', sans-serif;transform:scaleX(0.95);transform-origin:0 0;"><b style="font-size:9.6px">circlemult</b> <span style="font-size:8.6px">UserForm</span></div>
<svg style="position:absolute;left:489.5px;top:364.5px" width="7" height="8" viewBox="0 0 7 8"><path d="M0.8 1 L3.5 4.5 L6.2 1" fill="none" stroke="#666" stroke-width="1.2"/></svg>
<div style="left:1px;top:376px;width:50.5px;height:17px;background:#fff;border:1px solid #e0e0e0;border-bottom:none;box-sizing:border-box"></div>
<div style="left:51.7px;top:377.2px;width:50.8px;height:13.5px;background:#ececec;border:1px solid #dcdcdc;border-bottom:none;box-sizing:border-box"></div>
<div class="t" style="left:6px;top:377.78px;font-size:9px;color:#1a1a1a;font-weight:400;font-family:'Liberation Sans', sans-serif;transform:scaleX(0.93);transform-origin:0 0;">Alphabetic</div>
<div class="t" style="left:54.5px;top:378.78px;font-size:9px;color:#1a1a1a;font-weight:400;font-family:'Liberation Sans', sans-serif;transform:scaleX(0.93);transform-origin:0 0;">Categorized</div>
<div style="left:2px;top:392px;width:497.5px;height:418px;background:#ececec;border:1px solid #d0d0d0;box-sizing:border-box"></div>
<div style="left:5px;top:394.5px;width:491px;height:413.3px;background:#fff"></div>
<div style="left:3px;top:392.8px;width:494px;height:1.8px;background:#9a9a9a"></div>
<div style="left:3px;top:393px;width:2px;height:415.5px;background:#a0a0a0"></div>
<div style="left:496px;top:393px;width:1.5px;height:416px;background:#b4b4b4"></div>
<div style="left:3px;top:807.8px;width:494px;height:1.5px;background:#a8a8a8"></div>
<div style="left:5px;top:394px;width:80.5px;height:12.5px;background:#0078d7"></div>
<div style="left:5px;top:406.0px;width:478.5px;height:1.3px;background:#d4d4d4"></div>
<div class="t" style="left:5.6px;top:396.34px;font-size:9.2px;color:#fff;font-weight:400;font-family:'Liberation Sans', sans-serif;transform:scaleX(0.86);transform-origin:0 0;">(Name)</div>
<div class="t" style="left:87px;top:396.34px;font-size:9.2px;color:#111;font-weight:400;font-family:'Liberation Sans', sans-serif;transform:scaleX(0.86);transform-origin:0 0;">circlemult</div>
<div style="left:5px;top:418.5px;width:478.5px;height:1.3px;background:#d4d4d4"></div>
<div class="t" style="left:5.6px;top:408.84px;font-size:9.2px;color:#111;font-weight:400;font-family:'Liberation Sans', sans-serif;transform:scaleX(0.86);transform-origin:0 0;">BackColor</div>
<div style="left:87px;top:408.25px;width:9.5px;height:9.5px;background:#f0f0f0;border:1px solid #333;box-sizing:border-box"></div>
<div class="t" style="left:100px;top:408.84px;font-size:9.2px;color:#111;font-weight:400;font-family:'Liberation Sans', sans-serif;transform:scaleX(0.86);transform-origin:0 0;">&amp;H8000000F&amp;</div>
<div style="left:5px;top:431.0px;width:478.5px;height:1.3px;background:#d4d4d4"></div>
<div class="t" style="left:5.6px;top:421.34px;font-size:9.2px;color:#111;font-weight:400;font-family:'Liberation Sans', sans-serif;transform:scaleX(0.86);transform-origin:0 0;">BorderColor</div>
<div style="left:87px;top:420.75px;width:9.5px;height:9.5px;background:#000;border:1px solid #333;box-sizing:border-box"></div>
<div class="t" style="left:100px;top:421.34px;font-size:9.2px;color:#111;font-weight:400;font-family:'Liberation Sans', sans-serif;transform:scaleX(0.86);transform-origin:0 0;">&amp;H80000012&amp;</div>
<div style="left:5px;top:443.5px;width:478.5px;height:1.3px;background:#d4d4d4"></div>
<div class="t" style="left:5.6px;top:433.84px;font-size:9.2px;color:#111;font-weight:400;font-family:'Liberation Sans', sans-serif;transform:scaleX(0.86);transform-origin:0 0;">BorderStyle</div>
<div class="t" style="left:87px;top:433.84px;font-size:9.2px;color:#111;font-weight:400;font-family:'Liberation Sans', sans-serif;transform:scaleX(0.86);transform-origin:0 0;">0 - fmBorderStyleNone</div>
<div style="left:5px;top:456.0px;width:478.5px;height:1.3px;background:#d4d4d4"></div>
<div class="t" style="left:5.6px;top:446.34px;font-size:9.2px;color:#111;font-weight:400;font-family:'Liberation Sans', sans-serif;transform:scaleX(0.86);transform-origin:0 0;">Caption</div>
<div class="t" style="left:87px;top:446.34px;font-size:9.2px;color:#111;font-weight:400;font-family:'Liberation Sans', sans-serif;transform:scaleX(0.86);transform-origin:0 0;">circle</div>
<div style="left:5px;top:468.5px;width:478.5px;height:1.3px;background:#d4d4d4"></div>
<div class="t" style="left:5.6px;top:458.84px;font-size:9.2px;color:#111;font-weight:400;font-family:'Liberation Sans', sans-serif;transform:scaleX(0.86);transform-origin:0 0;">Cycle</div>
<div class="t" style="left:87px;top:458.84px;font-size:9.2px;color:#111;font-weight:400;font-family:'Liberation Sans', sans-serif;transform:scaleX(0.86);transform-origin:0 0;">0 - fmCycleAllForms</div>
<div style="left:5px;top:481.0px;width:478.5px;height:1.3px;background:#d4d4d4"></div>
<div class="t" style="left:5.6px;top:471.34px;font-size:9.2px;color:#111;font-weight:400;font-family:'Liberation Sans', sans-serif;transform:scaleX(0.86);transform-origin:0 0;">DrawBuffer</div>
<div class="t" style="left:87px;top:471.34px;font-size:9.2px;color:#111;font-weight:400;font-family:'Liberation Sans', sans-serif;transform:scaleX(0.86);transform-origin:0 0;">32000</div>
<div style="left:5px;top:493.5px;width:478.5px;height:1.3px;background:#d4d4d4"></div>
<div class="t" style="left:5.6px;top:483.84px;font-size:9.2px;color:#111;font-weight:400;font-family:'Liberation Sans', sans-serif;transform:scaleX(0.86);transform-origin:0 0;">Enabled</div>
<div class="t" style="left:87px;top:483.84px;font-size:9.2px;color:#111;font-weight:400;font-family:'Liberation Sans', sans-serif;transform:scaleX(0.86);transform-origin:0 0;">True</div>
<div style="left:5px;top:506.0px;width:478.5px;height:1.3px;background:#d4d4d4"></div>
<div class="t" style="left:5.6px;top:496.34px;font-size:9.2px;color:#111;font-weight:400;font-family:'Liberation Sans', sans-serif;transform:scaleX(0.86);transform-origin:0 0;">Font</div>
<div class="t" style="left:87px;top:496.34px;font-size:9.2px;color:#111;font-weight:400;font-family:'Liberation Sans', sans-serif;transform:scaleX(0.86);transform-origin:0 0;">Tahoma</div>
<div style="left:5px;top:518.5px;width:478.5px;height:1.3px;background:#d4d4d4"></div>
<div class="t" style="left:5.6px;top:508.84px;font-size:9.2px;color:#111;font-weight:400;font-family:'Liberation Sans', sans-serif;transform:scaleX(0.86);transform-origin:0 0;">ForeColor</div>
<div style="left:87px;top:508.25px;width:9.5px;height:9.5px;background:#000;border:1px solid #333;box-sizing:border-box"></div>
<div class="t" style="left:100px;top:508.84px;font-size:9.2px;color:#111;font-weight:400;font-family:'Liberation Sans', sans-serif;transform:scaleX(0.86);transform-origin:0 0;">&amp;H80000012&amp;</div>
<div style="left:5px;top:531.0px;width:478.5px;height:1.3px;background:#d4d4d4"></div>
<div class="t" style="left:5.6px;top:521.34px;font-size:9.2px;color:#111;font-weight:400;font-family:'Liberation Sans', sans-serif;transform:scaleX(0.86);transform-origin:0 0;">Height</div>
<div class="t" style="left:87px;top:521.34px;font-size:9.2px;color:#111;font-weight:400;font-family:'Liberation Sans', sans-serif;transform:scaleX(0.86);transform-origin:0 0;">68,25</div>
<div style="left:5px;top:543.5px;width:478.5px;height:1.3px;background:#d4d4d4"></div>
<div class="t" style="left:5.6px;top:533.84px;font-size:9.2px;color:#111;font-weight:400;font-family:'Liberation Sans', sans-serif;transform:scaleX(0.86);transform-origin:0 0;">HelpContextID</div>
<div class="t" style="left:87px;top:533.84px;font-size:9.2px;color:#111;font-weight:400;font-family:'Liberation Sans', sans-serif;transform:scaleX(0.86);transform-origin:0 0;">0</div>
<div style="left:5px;top:556.0px;width:478.5px;height:1.3px;background:#d4d4d4"></div>
<div class="t" style="left:5.6px;top:546.34px;font-size:9.2px;color:#111;font-weight:400;font-family:'Liberation Sans', sans-serif;transform:scaleX(0.86);transform-origin:0 0;">KeepScrollBarsVisible</div>
<div class="t" style="left:87px;top:546.34px;font-size:9.2px;color:#111;font-weight:400;font-family:'Liberation Sans', sans-serif;transform:scaleX(0.86);transform-origin:0 0;">3 - fmScrollBarsBoth</div>
<div style="left:5px;top:568.5px;width:478.5px;height:1.3px;background:#d4d4d4"></div>
<div class="t" style="left:5.6px;top:558.84px;font-size:9.2px;color:#111;font-weight:400;font-family:'Liberation Sans', sans-serif;transform:scaleX(0.86);transform-origin:0 0;">Left</div>
<div class="t" style="left:87px;top:558.84px;font-size:9.2px;color:#111;font-weight:400;font-family:'Liberation Sans', sans-serif;transform:scaleX(0.86);transform-origin:0 0;">800,25</div>
<div style="left:5px;top:581.0px;width:478.5px;height:1.3px;background:#d4d4d4"></div>
<div class="t" style="left:5.6px;top:571.34px;font-size:9.2px;color:#111;font-weight:400;font-family:'Liberation Sans', sans-serif;transform:scaleX(0.86);transform-origin:0 0;">MouseIcon</div>
<div class="t" style="left:87px;top:571.34px;font-size:9.2px;color:#111;font-weight:400;font-family:'Liberation Sans', sans-serif;transform:scaleX(0.86);transform-origin:0 0;">(None)</div>
<div style="left:5px;top:593.5px;width:478.5px;height:1.3px;background:#d4d4d4"></div>
<div class="t" style="left:5.6px;top:583.84px;font-size:9.2px;color:#111;font-weight:400;font-family:'Liberation Sans', sans-serif;transform:scaleX(0.86);transform-origin:0 0;">MousePointer</div>
<div class="t" style="left:87px;top:583.84px;font-size:9.2px;color:#111;font-weight:400;font-family:'Liberation Sans', sans-serif;transform:scaleX(0.86);transform-origin:0 0;">0 - fmMousePointerDefault</div>
<div style="left:5px;top:606.0px;width:478.5px;height:1.3px;background:#d4d4d4"></div>
<div class="t" style="left:5.6px;top:596.34px;font-size:9.2px;color:#111;font-weight:400;font-family:'Liberation Sans', sans-serif;transform:scaleX(0.86);transform-origin:0 0;">Picture</div>
<div class="t" style="left:87px;top:596.34px;font-size:9.2px;color:#111;font-weight:400;font-family:'Liberation Sans', sans-serif;transform:scaleX(0.86);transform-origin:0 0;">(None)</div>
<div style="left:5px;top:618.5px;width:478.5px;height:1.3px;background:#d4d4d4"></div>
<div class="t" style="left:5.6px;top:608.84px;font-size:9.2px;color:#111;font-weight:400;font-family:'Liberation Sans', sans-serif;transform:scaleX(0.86);transform-origin:0 0;">PictureAlignment</div>
<div class="t" style="left:87px;top:608.84px;font-size:9.2px;color:#111;font-weight:400;font-family:'Liberation Sans', sans-serif;transform:scaleX(0.86);transform-origin:0 0;">2 - fmPictureAlignmentCenter</div>
<div style="left:5px;top:631.0px;width:478.5px;height:1.3px;background:#d4d4d4"></div>
<div class="t" style="left:5.6px;top:621.34px;font-size:9.2px;color:#111;font-weight:400;font-family:'Liberation Sans', sans-serif;transform:scaleX(0.86);transform-origin:0 0;">PictureSizeMode</div>
<div class="t" style="left:87px;top:621.34px;font-size:9.2px;color:#111;font-weight:400;font-family:'Liberation Sans', sans-serif;transform:scaleX(0.86);transform-origin:0 0;">0 - fmPictureSizeModeClip</div>
<div style="left:5px;top:643.5px;width:478.5px;height:1.3px;background:#d4d4d4"></div>
<div class="t" style="left:5.6px;top:633.84px;font-size:9.2px;color:#111;font-weight:400;font-family:'Liberation Sans', sans-serif;transform:scaleX(0.86);transform-origin:0 0;">PictureTiling</div>
<div class="t" style="left:87px;top:633.84px;font-size:9.2px;color:#111;font-weight:400;font-family:'Liberation Sans', sans-serif;transform:scaleX(0.86);transform-origin:0 0;">False</div>
<div style="left:5px;top:656.0px;width:478.5px;height:1.3px;background:#d4d4d4"></div>
<div class="t" style="left:5.6px;top:646.34px;font-size:9.2px;color:#111;font-weight:400;font-family:'Liberation Sans', sans-serif;transform:scaleX(0.86);transform-origin:0 0;">RightToLeft</div>
<div class="t" style="left:87px;top:646.34px;font-size:9.2px;color:#111;font-weight:400;font-family:'Liberation Sans', sans-serif;transform:scaleX(0.86);transform-origin:0 0;">False</div>
<div style="left:5px;top:668.5px;width:478.5px;height:1.3px;background:#d4d4d4"></div>
<div class="t" style="left:5.6px;top:658.84px;font-size:9.2px;color:#111;font-weight:400;font-family:'Liberation Sans', sans-serif;transform:scaleX(0.86);transform-origin:0 0;">ScrollBars</div>
<div class="t" style="left:87px;top:658.84px;font-size:9.2px;color:#111;font-weight:400;font-family:'Liberation Sans', sans-serif;transform:scaleX(0.86);transform-origin:0 0;">0 - fmScrollBarsNone</div>
<div style="left:5px;top:681.0px;width:478.5px;height:1.3px;background:#d4d4d4"></div>
<div class="t" style="left:5.6px;top:671.34px;font-size:9.2px;color:#111;font-weight:400;font-family:'Liberation Sans', sans-serif;transform:scaleX(0.86);transform-origin:0 0;">ScrollHeight</div>
<div class="t" style="left:87px;top:671.34px;font-size:9.2px;color:#111;font-weight:400;font-family:'Liberation Sans', sans-serif;transform:scaleX(0.86);transform-origin:0 0;">0</div>
<div style="left:5px;top:693.5px;width:478.5px;height:1.3px;background:#d4d4d4"></div>
<div class="t" style="left:5.6px;top:683.84px;font-size:9.2px;color:#111;font-weight:400;font-family:'Liberation Sans', sans-serif;transform:scaleX(0.86);transform-origin:0 0;">ScrollLeft</div>
<div class="t" style="left:87px;top:683.84px;font-size:9.2px;color:#111;font-weight:400;font-family:'Liberation Sans', sans-serif;transform:scaleX(0.86);transform-origin:0 0;">0</div>
<div style="left:5px;top:706.0px;width:478.5px;height:1.3px;background:#d4d4d4"></div>
<div class="t" style="left:5.6px;top:696.34px;font-size:9.2px;color:#111;font-weight:400;font-family:'Liberation Sans', sans-serif;transform:scaleX(0.86);transform-origin:0 0;">ScrollTop</div>
<div class="t" style="left:87px;top:696.34px;font-size:9.2px;color:#111;font-weight:400;font-family:'Liberation Sans', sans-serif;transform:scaleX(0.86);transform-origin:0 0;">0</div>
<div style="left:5px;top:718.5px;width:478.5px;height:1.3px;background:#d4d4d4"></div>
<div class="t" style="left:5.6px;top:708.84px;font-size:9.2px;color:#111;font-weight:400;font-family:'Liberation Sans', sans-serif;transform:scaleX(0.86);transform-origin:0 0;">ScrollWidth</div>
<div class="t" style="left:87px;top:708.84px;font-size:9.2px;color:#111;font-weight:400;font-family:'Liberation Sans', sans-serif;transform:scaleX(0.86);transform-origin:0 0;">0</div>
<div style="left:5px;top:731.0px;width:478.5px;height:1.3px;background:#d4d4d4"></div>
<div class="t" style="left:5.6px;top:721.34px;font-size:9.2px;color:#111;font-weight:400;font-family:'Liberation Sans', sans-serif;transform:scaleX(0.86);transform-origin:0 0;">ShowModal</div>
<div class="t" style="left:87px;top:721.34px;font-size:9.2px;color:#111;font-weight:400;font-family:'Liberation Sans', sans-serif;transform:scaleX(0.86);transform-origin:0 0;">False</div>
<div style="left:5px;top:743.5px;width:478.5px;height:1.3px;background:#d4d4d4"></div>
<div class="t" style="left:5.6px;top:733.84px;font-size:9.2px;color:#111;font-weight:400;font-family:'Liberation Sans', sans-serif;transform:scaleX(0.86);transform-origin:0 0;">SpecialEffect</div>
<div class="t" style="left:87px;top:733.84px;font-size:9.2px;color:#111;font-weight:400;font-family:'Liberation Sans', sans-serif;transform:scaleX(0.86);transform-origin:0 0;">0 - fmSpecialEffectFlat</div>
<div style="left:5px;top:756.0px;width:478.5px;height:1.3px;background:#d4d4d4"></div>
<div class="t" style="left:5.6px;top:746.34px;font-size:9.2px;color:#111;font-weight:400;font-family:'Liberation Sans', sans-serif;transform:scaleX(0.86);transform-origin:0 0;">StartUpPosition</div>
<div class="t" style="left:87px;top:746.34px;font-size:9.2px;color:#111;font-weight:400;font-family:'Liberation Sans', sans-serif;transform:scaleX(0.86);transform-origin:0 0;">0 - Manual</div>
<div style="left:5px;top:768.5px;width:478.5px;height:1.3px;background:#d4d4d4"></div>
<div class="t" style="left:5.6px;top:758.84px;font-size:9.2px;color:#111;font-weight:400;font-family:'Liberation Sans', sans-serif;transform:scaleX(0.86);transform-origin:0 0;">Tag</div>
<div class="t" style="left:87px;top:758.84px;font-size:9.2px;color:#111;font-weight:400;font-family:'Liberation Sans', sans-serif;transform:scaleX(0.86);transform-origin:0 0;">150</div>
<div style="left:5px;top:781.0px;width:478.5px;height:1.3px;background:#d4d4d4"></div>
<div class="t" style="left:5.6px;top:771.34px;font-size:9.2px;color:#111;font-weight:400;font-family:'Liberation Sans', sans-serif;transform:scaleX(0.86);transform-origin:0 0;">Top</div>
<div class="t" style="left:87px;top:771.34px;font-size:9.2px;color:#111;font-weight:400;font-family:'Liberation Sans', sans-serif;transform:scaleX(0.86);transform-origin:0 0;">24</div>
<div style="left:5px;top:793.5px;width:478.5px;height:1.3px;background:#d4d4d4"></div>
<div class="t" style="left:5.6px;top:783.84px;font-size:9.2px;color:#111;font-weight:400;font-family:'Liberation Sans', sans-serif;transform:scaleX(0.86);transform-origin:0 0;">WhatsThisButton</div>
<div class="t" style="left:87px;top:783.84px;font-size:9.2px;color:#111;font-weight:400;font-family:'Liberation Sans', sans-serif;transform:scaleX(0.86);transform-origin:0 0;">False</div>
<div style="left:5px;top:806.0px;width:478.5px;height:1.3px;background:#d4d4d4"></div>
<div class="t" style="left:5.6px;top:796.34px;font-size:9.2px;color:#111;font-weight:400;font-family:'Liberation Sans', sans-serif;transform:scaleX(0.86);transform-origin:0 0;">WhatsThisHelp</div>
<div class="t" style="left:87px;top:796.34px;font-size:9.2px;color:#111;font-weight:400;font-family:'Liberation Sans', sans-serif;transform:scaleX(0.86);transform-origin:0 0;">False</div>
<div style="left:85.2px;top:394px;width:1.2px;height:414px;background:#c0c0c0"></div>
<div style="left:484px;top:394.5px;width:12px;height:413.3px;background:#f0f0f0"></div>
<div style="left:484px;top:408px;width:11.5px;height:364px;background:#cdcdcd"></div>
<svg style="position:absolute;left:486px;top:399px" width="7" height="8" viewBox="0 0 7 8"><path d="M0.8 4.5 L3.5 1 L6.2 4.5" fill="none" stroke="#555" stroke-width="1.4"/></svg>
<svg style="position:absolute;left:486px;top:798.5px" width="7" height="8" viewBox="0 0 7 8"><path d="M0.8 1 L3.5 4.5 L6.2 1" fill="none" stroke="#555" stroke-width="1.4"/></svg>
<div style="left:501px;top:58px;width:5.5px;height:755px;background:#f0f0f0"></div>
<div style="left:506px;top:58px;width:994px;height:755px;background:#f0f0f0"></div>
<div style="left:506px;top:58px;width:3px;height:753px;background:linear-gradient(to right,#6a6a6a,#9a9a9a)"></div>
<div style="left:506px;top:58px;width:993px;height:1.6px;background:#7a7a7a"></div>
<div style="left:515.5px;top:61px;width:483.5px;height:17px;background:#fff;border:1px solid #7a7a7a;border-color:#8a8a8a #9a9a9a #9a9a9a #8a8a8a;box-sizing:border-box"></div>
<div style="left:1007px;top:61px;width:484px;height:17px;background:#fff;border:1px solid #7a7a7a;border-color:#8a8a8a #9a9a9a #9a9a9a #8a8a8a;box-sizing:border-box"></div>
<div class="t" style="left:519px;top:63.29px;font-size:9.2px;color:#111;font-weight:700;font-family:'Liberation Sans', sans-serif;transform:scaleX(0.935);transform-origin:0 0;">Button01</div>
<div class="t" style="left:1010px;top:63.29px;font-size:9.2px;color:#111;font-weight:700;font-family:'Liberation Sans', sans-serif;transform:scaleX(0.935);transform-origin:0 0;">Click</div>
<svg style="position:absolute;left:988.5px;top:67.5px" width="7.5" height="8" viewBox="0 0 7.5 8"><path d="M0.8 1 L3.75 4.5 L6.7 1" fill="none" stroke="#5a5a5a" stroke-width="1.2"/></svg>
<svg style="position:absolute;left:1479.5px;top:67.5px" width="7.5" height="8" viewBox="0 0 7.5 8"><path d="M0.8 1 L3.75 4.5 L6.7 1" fill="none" stroke="#5a5a5a" stroke-width="1.2"/></svg>
<div style="left:509px;top:79.6px;width:988px;height:1.7px;background:#6f6f6f"></div>
<div style="left:509px;top:81.3px;width:16px;height:715px;background:#f0f0f0"></div>
<div style="left:525px;top:81.3px;width:1.3px;height:715px;background:#5a5a5a"></div>
<div style="left:526.3px;top:81.3px;width:957.7px;height:715px;background:#fff"></div>
<div style="left:1484px;top:80px;width:12.8px;height:6.5px;background:#fff;border:1.5px solid #777;border-top:none;border-left:none;box-sizing:border-box"></div>
<div style="left:1484px;top:79.6px;width:13px;height:1.7px;background:#6f6f6f"></div>
<div style="left:1484px;top:86.5px;width:13px;height:709.5px;background:#f0f0f0"></div>
<div style="left:1484.5px;top:100.2px;width:12px;height:160px;background:#cdcdcd"></div>
<svg style="position:absolute;left:1486.5px;top:90.5px" width="7" height="8" viewBox="0 0 7 8"><path d="M0.8 4.5 L3.5 1 L6.2 4.5" fill="none" stroke="#4a4a4a" stroke-width="1.8"/></svg>
<svg style="position:absolute;left:1486.5px;top:788px" width="7" height="8" viewBox="0 0 7 8"><path d="M0.8 1 L3.5 4.5 L6.2 1" fill="none" stroke="#4a4a4a" stroke-width="1.8"/></svg>
<div style="left:509px;top:796.3px;width:987px;height:13px;background:#f0f0f0"></div>
<div style="left:549.3px;top:797.3px;width:135.7px;height:11.4px;background:#cdcdcd"></div>
<svg style="position:absolute;left:539.5px;top:799px" width="6" height="8" viewBox="0 0 6 8"><path d="M4.5 0.8 L1 4 L4.5 7.2" fill="none" stroke="#4a4a4a" stroke-width="1.8"/></svg>
<svg style="position:absolute;left:1475.5px;top:799px" width="6" height="8" viewBox="0 0 6 8"><path d="M1 0.8 L4.5 4 L1 7.2" fill="none" stroke="#4a4a4a" stroke-width="1.8"/></svg>
<svg style="position:absolute;left:500px;top:790px" width="50" height="23" viewBox="500 790 50 23">
<path d="M509 809.2 H521.3 L522.3 808.2 V797.8 L523.1 797 H534.7" fill="none" stroke="#6a6a6a" stroke-width="1.3"/>
<path d="M511.7 799.6 H519.3 M511.7 802.6 H519.3" stroke="#2a2a2a" stroke-width="1.1"/>
<path d="M525.3 800.2 H533 M525.3 803.8 H533 M525.3 806.4 H533" stroke="#333" stroke-width="1.2"/>
</svg>
<div style="left:1494px;top:802px;width:1.2px;height:1.2px;background:#b8b8b8"></div>
<div style="left:1491px;top:805px;width:1.2px;height:1.2px;background:#b8b8b8"></div>
<div style="left:1494px;top:805px;width:1.2px;height:1.2px;background:#b8b8b8"></div>
<div style="left:1488px;top:808px;width:1.2px;height:1.2px;background:#b8b8b8"></div>
<div style="left:1491px;top:808px;width:1.2px;height:1.2px;background:#b8b8b8"></div>
<div style="left:1494px;top:808px;width:1.2px;height:1.2px;background:#b8b8b8"></div>
<div style="left:1497px;top:60px;width:3px;height:753px;background:#f4f4f4"></div>
<div style="left:506px;top:809.5px;width:994px;height:3.5px;background:#f4f4f4"></div>
<div class="code" style="left:535px;top:109.15px"><span class="k">Private</span> <span class="k">Sub</span> Button01_Click()
  <span class="k">Dim</span> x#, y#, b <span class="k">As</span> <span class="k">Boolean</span>, Shift <span class="k">As</span> <span class="k">Long</span>, sr <span class="k">As</span> ShapeRange
<span class="k">Dim</span> cir <span class="k">As</span> Shape

ActiveDocument.Unit = cdrMillimeter
ActivePage.FindShapes(Name:=&quot;CIR&quot;).Delete
<span class="k">Set</span> cir = ActiveLayer.CreateEllipse(x, y, 0.1, 0.1)
   cir.Fill.ApplyNoFill
cir.Outline.color.CMYKAssign 0, 0, 0, 100
cir.Outline.Width = 0.001
cir.Name = &quot;CIR&quot;

ActiveDocument.ReferencePoint = cdrCenter
<span class="k">Set</span> sr = ActiveSelectionRange:
<span class="k">If</span> sr.Count = 0 <span class="k">Then</span> <span class="k">Exit</span> <span class="k">Sub</span>
   <span class="k">Do</span>
        b = ActiveDocument.GetUserClick(x, y, Shift, 10, <span class="k">False</span>, cdrCursorWinCross)
        <span class="k">If</span> <span class="k">Not</span> b <span class="k">Then</span> sr.Duplicate.SetPosition x, y


   <span class="k">Loop</span> <span class="k">Until</span> b &lt;&gt; <span class="k">False</span>

ActivePage.FindShapes(Name:=&quot;CIR&quot;).Delete

<span class="k">End</span> <span class="k">Sub</span></div>
<div class="code" style="left:535px;top:434.15px"><span class="k">Private</span> <span class="k">Sub</span> CommandButton2_Click()

<span class="k">Dim</span> x#, y#, b <span class="k">As</span> <span class="k">Boolean</span>, Shift <span class="k">As</span> <span class="k">Long</span>, sr <span class="k">As</span> ShapeRange
<span class="k">Dim</span> cir <span class="k">As</span> Shape

ActiveDocument.Unit = cdrMillimeter
ActivePage.FindShapes(Name:=&quot;CIR&quot;).Delete
<span class="k">Set</span> cir = ActiveLayer.CreateEllipse(x, y, 0.15, 0.15)
   cir.Fill.ApplyNoFill
cir.Outline.color.CMYKAssign 71, 0, 100, 0
cir.Outline.Width = 0.001
cir.Name = &quot;CIR&quot;

ActiveDocument.ReferencePoint = cdrCenter
<span class="k">Set</span> sr = ActiveSelectionRange:
<span class="k">If</span> sr.Count = 0 <span class="k">Then</span> <span class="k">Exit</span> <span class="k">Sub</span>
   <span class="k">Do</span>
        b = ActiveDocument.GetUserClick(x, y, Shift, 10, <span class="k">False</span>, cdrCursorWinCross)
        <span class="k">If</span> <span class="k">Not</span> b <span class="k">Then</span> sr.Duplicate.SetPosition x, y


   <span class="k">Loop</span> <span class="k">Until</span> b &lt;&gt; <span class="k">False</span>

ActivePage.FindShapes(Name:=&quot;CIR&quot;).Delete

<span class="k">End</span> <span class="k">Sub</span></div>
<div class="code" style="left:535px;top:772.25px"><span class="k">Private</span> <span class="k">Sub</span> CommandButton3_Click()
<span class="k">Dim</span> x#, y#, b <span class="k">As</span> <span class="k">Boolean</span>, Shift <span class="k">As</span> <span class="k">Long</span>, sr <span class="k">As</span> ShapeRange</div>
<div style="left:526.3px;top:419.8px;width:957.7px;height:1.2px;background:#9a9a9a"></div>
<div style="left:526.3px;top:757.3px;width:957.7px;height:1.2px;background:#9a9a9a"></div>
<div style="left:534.8px;top:396.5px;width:1px;height:11px;background:#000"></div></body></html>
